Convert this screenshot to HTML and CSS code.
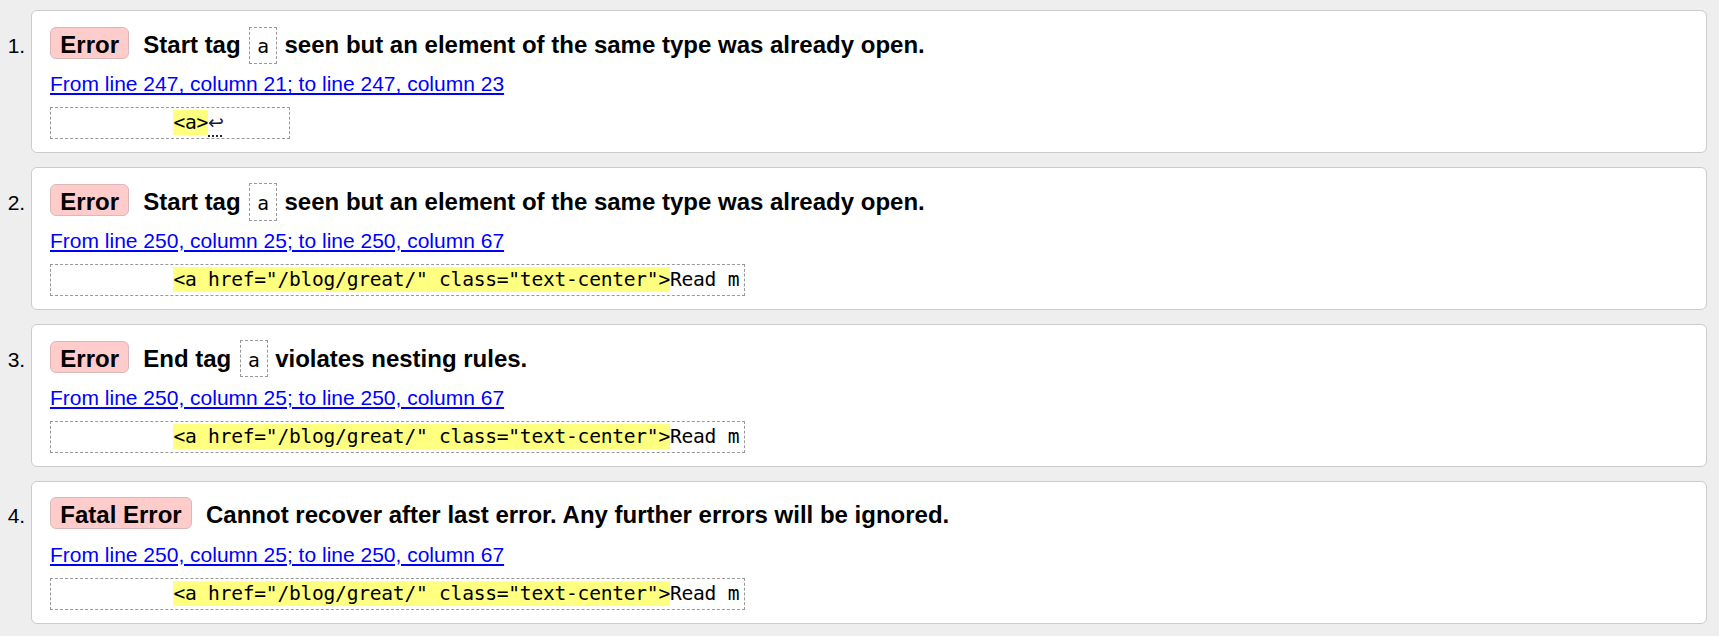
FILE: index.html
```html
<!DOCTYPE html>
<html lang="en">
<head>
<meta charset="utf-8">
<title>Validation results</title>
<link rel="stylesheet" href="styles.css">
</head>
<body>
<ol class="messages">
  <li class="card">
    <p class="head"><span class="badge">Error</span><span class="title">Start tag <code class="tag">a</code> seen but an element of the same type was already open.</span></p>
    <p class="loc"><a href="#">From line 247, column 21; to line 247, column 23</a></p>
    <pre class="extract">          <mark>&lt;a&gt;</mark><span class="lf">↩</span>     </pre>
  </li>
  <li class="card">
    <p class="head"><span class="badge">Error</span><span class="title">Start tag <code class="tag">a</code> seen but an element of the same type was already open.</span></p>
    <p class="loc"><a href="#">From line 250, column 25; to line 250, column 67</a></p>
    <pre class="extract">          <mark>&lt;a href="/blog/great/" class="text-center"&gt;</mark>Read m</pre>
  </li>
  <li class="card">
    <p class="head"><span class="badge">Error</span><span class="title">End tag <code class="tag">a</code> violates nesting rules.</span></p>
    <p class="loc"><a href="#">From line 250, column 25; to line 250, column 67</a></p>
    <pre class="extract">          <mark>&lt;a href="/blog/great/" class="text-center"&gt;</mark>Read m</pre>
  </li>
  <li class="card">
    <p class="head"><span class="badge">Fatal Error</span><span class="title">Cannot recover after last error. Any further errors will be ignored.</span></p>
    <p class="loc"><a href="#">From line 250, column 25; to line 250, column 67</a></p>
    <pre class="extract">          <mark>&lt;a href="/blog/great/" class="text-center"&gt;</mark>Read m</pre>
  </li>
</ol>
</body>
</html>
```

FILE: styles.css
```css
html, body {
  margin: 0;
  padding: 0;
  background: #eeeeee;
}

body {
  font-family: "Liberation Sans", Arial, sans-serif;
  color: #000;
}

.messages {
  margin: 0;
  padding: 10.3px 12px 0 31px;
  list-style: decimal outside;
  font-size: 21px;
}

.card {
  background: #fff;
  border: 1px solid #cccccc;
  border-radius: 6px;
  padding: 15.7px 18px 13px 18px;
  margin-bottom: 13.8px;
  height: 143px;
  box-sizing: border-box;
}

.head {
  margin: 0;
  font-size: 24px;
  font-weight: bold;
  line-height: 33px;
  height: 34px;
  white-space: nowrap;
}

.badge {
  display: inline-block;
  vertical-align: baseline;
  background: #ffcccc;
  border: 1px solid #dcb8b8;
  border-radius: 6px;
  padding: 3px 9.3px 0 9.3px;
  line-height: 27px;
  margin-right: 14px;
}

.tag {
  display: inline-block;
  vertical-align: baseline;
  font-family: "DejaVu Sans Mono", "Liberation Mono", monospace;
  font-size: 19.6px;
  font-weight: normal;
  letter-spacing: -0.25px;
  line-height: 23px;
  padding: 7.4px 7px 4.9px 7px;
  border: 1px dashed #999;
  margin: -3px 1px -3px 2px;
}

.loc {
  margin: 11.4px 0 0 0;
  font-size: 21px;
  line-height: 24px;
}

.loc a {
  color: #00f;
  text-decoration: underline;
}

.extract {
  margin: 10.8px 0 0 0;
  width: fit-content;
  border: 1px dashed #999;
  padding: 0 5px 0 7px;
  font-family: "DejaVu Sans Mono", "Liberation Mono", monospace;
  font-size: 19.6px;
  letter-spacing: -0.25px;
  line-height: 30px;
  color: #000;
}

.extract mark {
  background: #ffff80;
  color: #000;
  padding: 1px 0;
}

.lf {
  display: inline-block;
  width: 18px;
  font-family: "DejaVu Sans", sans-serif;
  font-size: 19px;
  line-height: 23px;
  color: #1a1a40;
  text-decoration: underline dotted;
  text-underline-offset: 6px;
}
```
